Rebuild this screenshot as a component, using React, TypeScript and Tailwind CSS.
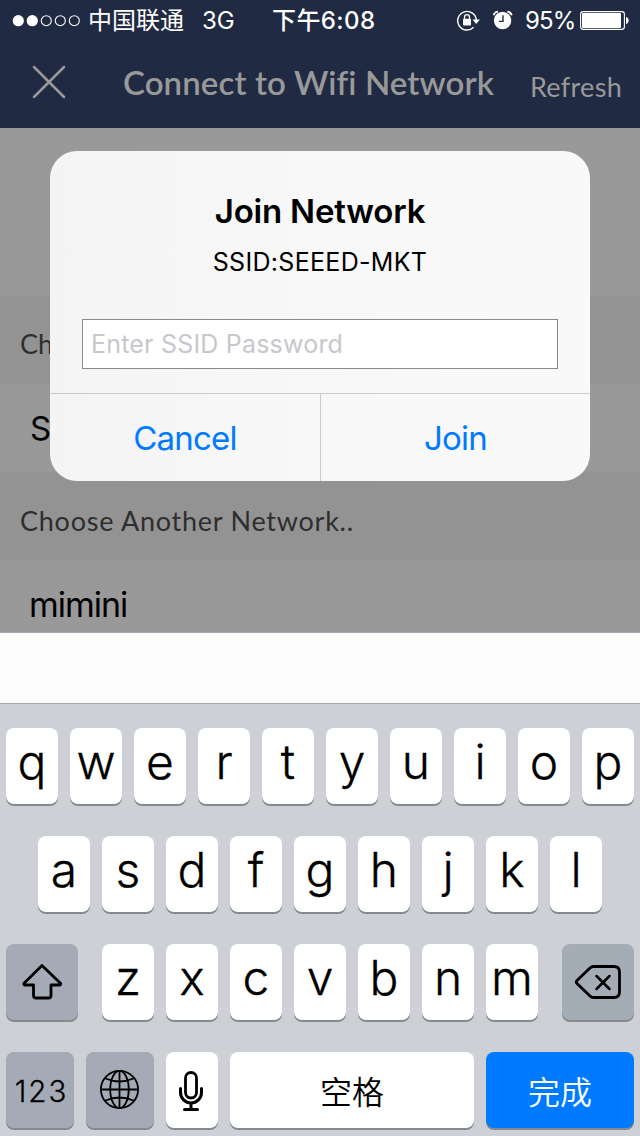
import type { ReactNode } from "react";

const INTER = "font-['Inter','Noto_Sans_CJK_SC',sans-serif]";
const LATO = "font-['Lato',sans-serif]";

function StatusBar() {
  return (
    <div className="flex h-10 items-start pl-3 text-white">
      <svg className="mt-3 shrink-0" width="70" height="18" viewBox="0 0 70 18">
        <circle cx="6.3" cy="8.7" r="5.6" fill="#fff" />
        <circle cx="20.3" cy="8.7" r="5.6" fill="#fff" />
        <circle cx="34.3" cy="8.7" r="5" fill="none" stroke="#fff" strokeWidth="1.1" />
        <circle cx="48.3" cy="8.7" r="5" fill="none" stroke="#fff" strokeWidth="1.1" />
        <circle cx="62.3" cy="8.7" r="5" fill="none" stroke="#fff" strokeWidth="1.1" />
      </svg>
      <span className="ml-[6px] w-[114px] shrink-0 text-[24px] leading-[42px] whitespace-nowrap">中国联通</span>
      <span className="w-[70px] shrink-0 text-[24px] leading-[42px] whitespace-nowrap">3G</span>
      <span className="w-[184px] shrink-0 text-[24px] leading-[42px] font-medium tracking-[0.4px] whitespace-nowrap">下午6:08</span>
      <svg className="mt-2 shrink-0" width="26" height="24" viewBox="0 0 26 24" fill="none">
        <path d="M17.6 19.3A9.3 9.3 0 1 1 20.3 12.3" stroke="#fff" strokeWidth="1.4" />
        <path d="M16.5 11.5h7.4l-3.7 4.4z" fill="#fff" />
        <rect x="7" y="10.8" width="8" height="6.6" rx=".6" fill="#fff" />
        <path d="M8.5 11V9.2a2.5 2.5 0 0 1 5 0V11" stroke="#fff" strokeWidth="1.3" />
      </svg>
      <svg className="mt-2 ml-[10px] shrink-0" width="22" height="24" viewBox="0 0 22 24" fill="none">
        <circle cx="10.6" cy="12.5" r="8.7" fill="#fff" />
        <path d="M1.6 7.2A5 5 0 0 1 6 3.7M15.3 3.7a5 5 0 0 1 4.4 3.5" stroke="#fff" strokeWidth="1.8" />
        <path d="M11 7.3v6.1H7" stroke="#202a42" strokeWidth="1.4" />
      </svg>
      <span className="ml-[11px] w-[55px] shrink-0 text-[24px] leading-[42px] tracking-[-0.8px]">95%</span>
      <svg className="mt-[10px] shrink-0" width="50" height="21" viewBox="0 0 50 21">
        <rect x=".6" y="1.6" width="43.8" height="17.8" rx="2.6" fill="none" stroke="#fff" strokeWidth="1.1" />
        <rect x="2" y="3" width="39" height="15" rx="1" fill="#fff" />
        <path d="M46 7c1.8.6 2.7 1.700 2.700 3.500s-.9 2.900-2.700 3.500z" fill="#fff" />
      </svg>
    </div>
  );
}

function NavBar() {
  return (
    <div className={`flex h-[88px] items-start text-[#999] ${LATO}`}>
      <svg className="mt-[25px] ml-8 shrink-0" width="34" height="34" viewBox="0 0 34 34">
        <path d="M2 2l30 30M32 2L2 32" stroke="#999" strokeWidth="2.5" strokeLinecap="round" />
      </svg>
      <h1 className="mt-[22px] ml-[57px] w-[407px] shrink-0 text-[33px] leading-[40px] font-semibold tracking-[0.1px] whitespace-nowrap">
        Connect to Wifi Network
      </h1>
      <span className="mt-[27px] text-[27px] leading-[40px] tracking-[0.3px] whitespace-nowrap">Refresh</span>
    </div>
  );
}

function Page() {
  return (
    <div className="h-[505px] bg-[#999]">
      <div className="h-[168px]" />
      <div className={`h-[88px] bg-[#939393] pt-[28px] pl-5 text-[27px] leading-[40px] text-[#2e2e2e] ${LATO}`}>
        Ch
      </div>
      <div className="h-[88px] pt-[24px] pl-[30px] text-[33px] leading-[40px] text-black">S</div>
      <div className={`h-[88px] bg-[#939393] pt-[28px] pl-5 text-[27px] leading-[41px] text-[#2e2e2e] ${LATO}`}>
        <span className="tracking-[0.75px]">Choose Another Network..</span>
      </div>
      <div className="h-[73px] border-b border-[#a0a5b0] pt-[24px] pl-[29px] text-[34px] leading-[41px] tracking-[-1px] text-black">mimini</div>
    </div>
  );
}

function JoinDialog() {
  return (
    <div className="absolute top-[151px] left-[50px] flex h-[330px] w-[540px] flex-col overflow-hidden rounded-[27px] bg-[#f8f8f8] bg-gradient-to-r from-[#f4f4f4] via-[#f8f8f8] to-[#f9f9f9] text-center">
      <h2 className="mt-[40px] text-[33px] leading-[40px] font-semibold tracking-[-0.2px] text-black">Join Network</h2>
      <p className="mt-[11px] text-[25px] leading-[41px] tracking-[0.3px] text-black">SSID:SEEED-MKT</p>
      <div className="mx-8 mt-[36px] h-[50px] border border-[#8a8a8a] bg-white pl-2 text-left text-[25px] leading-[49px] tracking-[0.2px] text-[#c7c7cd]">
        Enter SSID Password
      </div>
      <div className="mt-6 flex grow border-t border-[#cbcbcd] text-[33px] leading-[88px] tracking-[-0.8px] text-[#007aff]">
        <div className="w-[270px]">Cancel</div>
        <div className="w-[270px] border-l border-[#cbcbcd]">Join</div>
      </div>
    </div>
  );
}

function Key({ children, look = "w-[52px] bg-white" }: { children: ReactNode; look?: string }) {
  return (
    <div className={`flex h-[76px] shrink-0 justify-center rounded-[8px] shadow-[0_2px_0_#85888d] ${look}`}>
      {children}
    </div>
  );
}

function Letters({ row }: { row: string }) {
  return (
    <>
      {row.split("").map((c) => (
        <Key key={c}>
          <span className="text-[48px] leading-[67px] font-light text-black [-webkit-text-stroke:0.3px_#000]">{c}</span>
        </Key>
      ))}
    </>
  );
}

function Keyboard() {
  return (
    <div className="flex h-[433px] flex-col gap-8 border-t border-[#a3a8ae] bg-[#cdd0d5] px-[6px] pt-6">
      <div className="flex gap-3">
        <Letters row="qwertyuiop" />
      </div>
      <div className="flex justify-center gap-3">
        <Letters row="asdfghjkl" />
      </div>
      <div className="flex justify-between">
        <Key look="w-[72px] bg-[#a5abb6]">
          <svg width="72" height="76" viewBox="0 0 72 76">
            <path d="M36 21.500L17.800 39.500Q17.500 41 19 41H27.500V51.500Q27.500 54 30 54H42.500Q45 54 45 51.500V41H53.500Q55 41 54.700 39.500Z" fill="none" stroke="#000" strokeWidth="2.8" strokeLinejoin="round" />
          </svg>
        </Key>
        <div className="flex gap-3">
          <Letters row="zxcvbnm" />
        </div>
        <Key look="w-[72px] bg-[#a4acb6]">
          <svg width="72" height="76" viewBox="0 0 72 76" fill="none" stroke="#000" strokeWidth="2.8" strokeLinecap="round" strokeLinejoin="round">
            <path d="M31.500 22.500H52Q57.500 22.500 57.500 28V48Q57.500 53.500 52 53.500H31.500Q29.500 53.500 28 52L15 39.500Q13.500 38 15 36.500L28 24Q29.500 22.500 31.500 22.500Z" />
            <path d="M34.500 32l13 13M47.500 32l-13 13" strokeWidth="2.5" />
          </svg>
        </Key>
      </div>
      <div className="flex gap-3">
        <Key look="w-[68px] bg-[#a4abb6]">
          <span className="pl-[3px] text-[29.5px] leading-[78px] font-light tracking-[2px] text-black [-webkit-text-stroke:0.3px_#000]">123</span>
        </Key>
        <Key look="w-[68px] bg-[#a4abb6]">
          <svg width="68" height="76" viewBox="0 0 68 76" fill="none" stroke="#000" strokeWidth="1.8">
            <circle cx="33.500" cy="37.500" r="18.600" />
            <ellipse cx="33.500" cy="37.500" rx="9.300" ry="18.600" />
            <path d="M33.500 19v37M15 37.500h37M19.500 26.500q14 6 28 0M19.500 48.500q14-6 28 0" />
          </svg>
        </Key>
        <Key>
          <svg width="52" height="76" viewBox="0 0 52 76" fill="none" stroke="#000" strokeWidth="3" strokeLinecap="round">
            <rect x="19.500" y="20.500" width="11" height="25.500" rx="5.500" strokeWidth="2.800" />
            <path d="M14.500 36.500v4a10.500 10.500 0 0 0 21 0v-4M25 51v6.500M18.500 57.500h13" />
          </svg>
        </Key>
        <Key look="w-[244px] bg-white">
          <span className="text-[32px] leading-[81px] font-[350] text-black">空格</span>
        </Key>
        <Key look="w-[148px] bg-[#007aff]">
          <span className="text-[32px] leading-[81px] font-[350] text-white">完成</span>
        </Key>
      </div>
    </div>
  );
}

export default function App() {
  return (
    <div className={`relative h-[1136px] w-[640px] overflow-hidden bg-white ${INTER}`}>
      <header className="h-32 bg-[#202a42]">
        <StatusBar />
        <NavBar />
      </header>
      <Page />
      <div className="h-[70px] bg-[#fdfdfd]" />
      <Keyboard />
      <JoinDialog />
    </div>
  );
}
